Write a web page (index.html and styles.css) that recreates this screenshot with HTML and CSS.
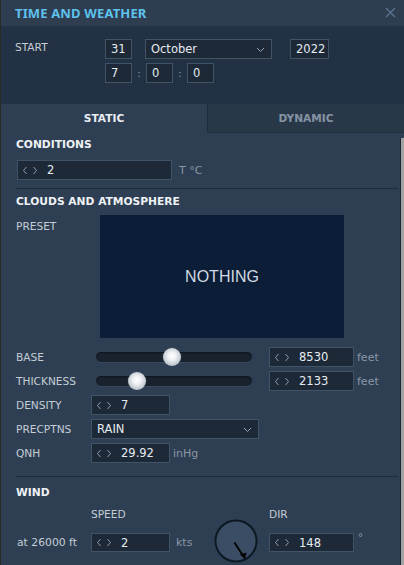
FILE: index.html
```html
<!DOCTYPE html>
<html>
<head>
<meta charset="utf-8">
<link rel="stylesheet" href="styles.css">
</head>
<body>
<div class="win">
  <header class="titlebar">
    <span class="title">TIME AND WEATHER</span>
    <svg class="close" width="11" height="11" viewBox="0 0 11 11"><path d="M1 1L10 10M10 1L1 10" stroke="#5d7590" stroke-width="1.2" fill="none"/></svg>
  </header>

  <section class="start">
    <div class="start-label">START</div>
    <div class="start-fields">
      <div class="frow">
        <div class="box w27">31</div>
        <div class="select sel-month">October<svg class="chev" width="9" height="6" viewBox="0 0 9 6"><path d="M1 1L4.5 4.5L8 1" stroke="#9aa6b3" stroke-width="1" fill="none"/></svg></div>
        <div class="box w39 year">2022</div>
      </div>
      <div class="frow">
        <div class="box w27">7</div><span class="colon">:</span>
        <div class="box w27">0</div><span class="colon">:</span>
        <div class="box w27">0</div>
      </div>
    </div>
  </section>

  <nav class="tabs">
    <div class="tab active">STATIC</div>
    <div class="tab">DYNAMIC</div>
  </nav>

  <main class="content">
    <h2 class="heading h-cond">CONDITIONS</h2>
    <div class="row temp-row">
      <div class="spin w155"><svg class="arr" width="16" height="9" viewBox="0 0 16 9"><path d="M4.5 1L1.5 4.5L4.5 8M11.5 1L14.5 4.5L11.5 8" stroke="#8e9aa7" stroke-width="1" fill="none"/></svg><span class="val">2</span></div>
      <span class="unit">T °C</span>
    </div>
    <div class="divider d1"></div>

    <h2 class="heading h-clouds">CLOUDS AND ATMOSPHERE</h2>
    <div class="preset-row">
      <div class="label preset-label">PRESET</div>
      <div class="preset"><span>NOTHING</span></div>
    </div>

    <div class="rows">
      <div class="row">
        <div class="label">BASE</div>
        <div class="slider"><div class="track"><div class="thumb" style="left:67px"></div></div></div>
        <div class="spin w85"><svg class="arr" width="16" height="9" viewBox="0 0 16 9"><path d="M4.5 1L1.5 4.5L4.5 8M11.5 1L14.5 4.5L11.5 8" stroke="#8e9aa7" stroke-width="1" fill="none"/></svg><span class="val">8530</span></div>
        <span class="unit">feet</span>
      </div>
      <div class="row">
        <div class="label">THICKNESS</div>
        <div class="slider"><div class="track"><div class="thumb" style="left:32px"></div></div></div>
        <div class="spin w85"><svg class="arr" width="16" height="9" viewBox="0 0 16 9"><path d="M4.5 1L1.5 4.5L4.5 8M11.5 1L14.5 4.5L11.5 8" stroke="#8e9aa7" stroke-width="1" fill="none"/></svg><span class="val">2133</span></div>
        <span class="unit">feet</span>
      </div>
      <div class="row">
        <div class="label">DENSITY</div>
        <div class="spin w79"><svg class="arr" width="16" height="9" viewBox="0 0 16 9"><path d="M4.5 1L1.5 4.5L4.5 8M11.5 1L14.5 4.5L11.5 8" stroke="#8e9aa7" stroke-width="1" fill="none"/></svg><span class="val">7</span></div>
      </div>
      <div class="row">
        <div class="label">PRECPTNS</div>
        <div class="select sel-prec">RAIN<svg class="chev" width="9" height="6" viewBox="0 0 9 6"><path d="M1 1L4.5 4.5L8 1" stroke="#9aa6b3" stroke-width="1" fill="none"/></svg></div>
      </div>
      <div class="row">
        <div class="label">QNH</div>
        <div class="spin w79"><svg class="arr" width="16" height="9" viewBox="0 0 16 9"><path d="M4.5 1L1.5 4.5L4.5 8M11.5 1L14.5 4.5L11.5 8" stroke="#8e9aa7" stroke-width="1" fill="none"/></svg><span class="val">29.92</span></div>
        <span class="unit">inHg</span>
      </div>
    </div>
    <div class="divider d2"></div>

    <h2 class="heading h-wind">WIND</h2>
    <div class="wind">
      <div class="wl speed-l">SPEED</div>
      <div class="wl dir-l">DIR</div>
      <div class="label alt">at 26000 ft</div>
      <div class="spin w79 speed-in"><svg class="arr" width="16" height="9" viewBox="0 0 16 9"><path d="M4.5 1L1.5 4.5L4.5 8M11.5 1L14.5 4.5L11.5 8" stroke="#8e9aa7" stroke-width="1" fill="none"/></svg><span class="val">2</span></div>
      <span class="unit kts">kts</span>
      <svg class="dial" width="44" height="44" viewBox="0 0 44 44">
        <circle cx="22" cy="22" r="20.5" fill="#3a4d65" stroke="#0e1822" stroke-width="2"/>
        <path d="M20.5 23.5L29.5 37.5" stroke="#050505" stroke-width="2" fill="none"/>
        <path d="M26 35.5L31 40.5L32.5 33.5Z" fill="#050505"/>
      </svg>
      <div class="spin w85 dir-in"><svg class="arr" width="16" height="9" viewBox="0 0 16 9"><path d="M4.5 1L1.5 4.5L4.5 8M11.5 1L14.5 4.5L11.5 8" stroke="#8e9aa7" stroke-width="1" fill="none"/></svg><span class="val">148</span></div>
      <span class="unit deg">°</span>
    </div>
  </main>
  <div class="scrollbar"></div>
</div>
</body>
</html>
```

FILE: styles.css
```css
* { box-sizing: border-box; margin: 0; padding: 0; }
html, body { width: 404px; height: 565px; overflow: hidden; background: #2b2b2b; }
body { font-family: "DejaVu Sans", "Noto Sans", sans-serif; color: #c5cdd5; }

.win {
  position: relative;
  width: 404px;
  height: 565px;
  border-left: 1px solid #2c2a28;
  background: #2e3f53;
  overflow: hidden;
}

.titlebar {
  height: 26px;
  background: #2e3d50;
  display: flex;
  align-items: center;
  justify-content: space-between;
  padding: 0 8px 0 14px;
}
.title {
  font-family: "Noto Sans", "DejaVu Sans", sans-serif;
  font-weight: bold;
  font-size: 13px;
  color: #5ec1ec;
  letter-spacing: 0.15px;
  line-height: 26px;
}
.close { margin-top: -2px; }

.start {
  height: 78px;
  background: #223143;
  display: flex;
  padding: 13px 0 0 14px;
}
.start-label {
  width: 90px;
  font-size: 10.6px;
  line-height: 14px;
  padding-top: 1px;
  color: #c5cdd5;
}
.start-fields { display: flex; flex-direction: column; gap: 4px; }
.frow { display: flex; align-items: center; }

.box, .spin, .select {
  height: 20px;
  background: #1d2937;
  border: 1px solid #415366;
  color: #e6ebf0;
  font-size: 11.5px;
  line-height: 18px;
  display: flex;
  align-items: center;
}
.box { padding-left: 5px; }
.w27 { width: 27px; }
.w39 { width: 39px; }
.year { margin-left: 18px; }
.select { justify-content: space-between; padding: 0 6px 0 5px; }
.sel-month { width: 127px; margin-left: 13px; }
.chev { flex: none; margin-top: 1px; }
.colon { width: 14px; text-align: center; color: #8a96a3; font-size: 10.5px; line-height: 18px; }

.tabs { display: flex; height: 29px; }
.tab {
  font-weight: bold;
  font-size: 10.6px;
  line-height: 29px;
  text-align: center;
  color: #8593a3;
}
.tab.active { width: 206px; color: #e9eef3; background: #2e3f53; }
.tab:not(.active) {
  flex: 1;
  background: #283849;
  border-left: 1px solid #1f2c3b;
  border-bottom: 1px solid #23303f;
}

.content { padding: 0 6px 0 15px; }

.heading {
  font-weight: bold;
  font-size: 10.7px;
  line-height: 16px;
  color: #eef2f5;
}
.h-cond { margin-top: 4px; }
.h-clouds { margin-top: 5px; }
.h-wind { margin-top: 8px; }

.divider { height: 1px; background: #1f2b39; }
.d1 { margin-top: 8px; }
.d2 { margin-top: 13px; }

.row { display: flex; align-items: center; }
.temp-row { margin-top: 7px; padding-left: 1px; }

.spin { padding-left: 4px; }
.arr { flex: none; }
.val { margin-left: 9px; }
.w155 { width: 155px; }
.w85 { width: 85px; }
.w79 { width: 79px; }

.unit { color: #8a96a4; font-size: 11px; margin-left: 7px; }

.label { width: 75px; font-size: 10.6px; line-height: 14px; color: #c5cdd5; flex: none; }

.preset-row { display: flex; margin-top: 5px; }
.preset-label { width: 84px; padding-top: 4px; }
.preset {
  width: 244px;
  height: 123px;
  background: #0c1e37;
  display: flex;
  align-items: center;
  justify-content: center;
  font-family: "Liberation Sans", Arial, sans-serif;
  font-size: 16px;
  color: #d2dae3;
  padding-top: 1px;
}

.rows { display: flex; flex-direction: column; gap: 4px; margin-top: 9px; }
.rows .row { height: 20px; }
.rows .unit { margin-left: 3px; }

.slider { width: 178px; padding-left: 5px; flex: none; }
.track {
  position: relative;
  width: 156px;
  height: 10px;
  border-radius: 5px;
  background: #19232f;
  box-shadow: inset 0 1px 2px #0e151d, 0 1px 0 #3a4a5c;
}
.thumb {
  position: absolute;
  top: -4px;
  width: 18px;
  height: 18px;
  border-radius: 50%;
  background: radial-gradient(circle at 50% 45%, #ffffff 0%, #eef1f4 30%, #c5cbd2 65%, #8d959e 100%);
  box-shadow: 0 0 1px #6b7783;
}

.sel-prec { width: 168px; }

.wind {
  display: grid;
  grid-template-columns: 75px 79px 45px 54px 85px auto;
  grid-template-rows: 16px 19px;
  row-gap: 11px;
  margin-top: 5px;
  align-items: center;
}
.wl { font-size: 10.6px; line-height: 16px; color: #c5cdd5; }
.speed-l { grid-column: 2; grid-row: 1; }
.dir-l { grid-column: 5; grid-row: 1; }
.alt { grid-column: 1; grid-row: 2; padding-left: 1px; font-size: 10.8px; }
.speed-in { grid-column: 2; grid-row: 2; height: 19px; }
.kts { grid-column: 3; grid-row: 2; margin-left: 6px; }
.dial { grid-column: 4; grid-row: 2; margin: -14px 0 -11px -1px; }
.dir-in { grid-column: 5; grid-row: 2; height: 19px; }
.deg { grid-column: 6; grid-row: 2; margin-left: 4px; align-self: start; font-size: 10px; margin-top: -1px; }

.scrollbar {
  position: absolute;
  right: 0;
  top: 138px;
  bottom: 0;
  width: 4px;
  background: #a2a2a2;
  border-left: 1px solid #1b2633;
}
```
